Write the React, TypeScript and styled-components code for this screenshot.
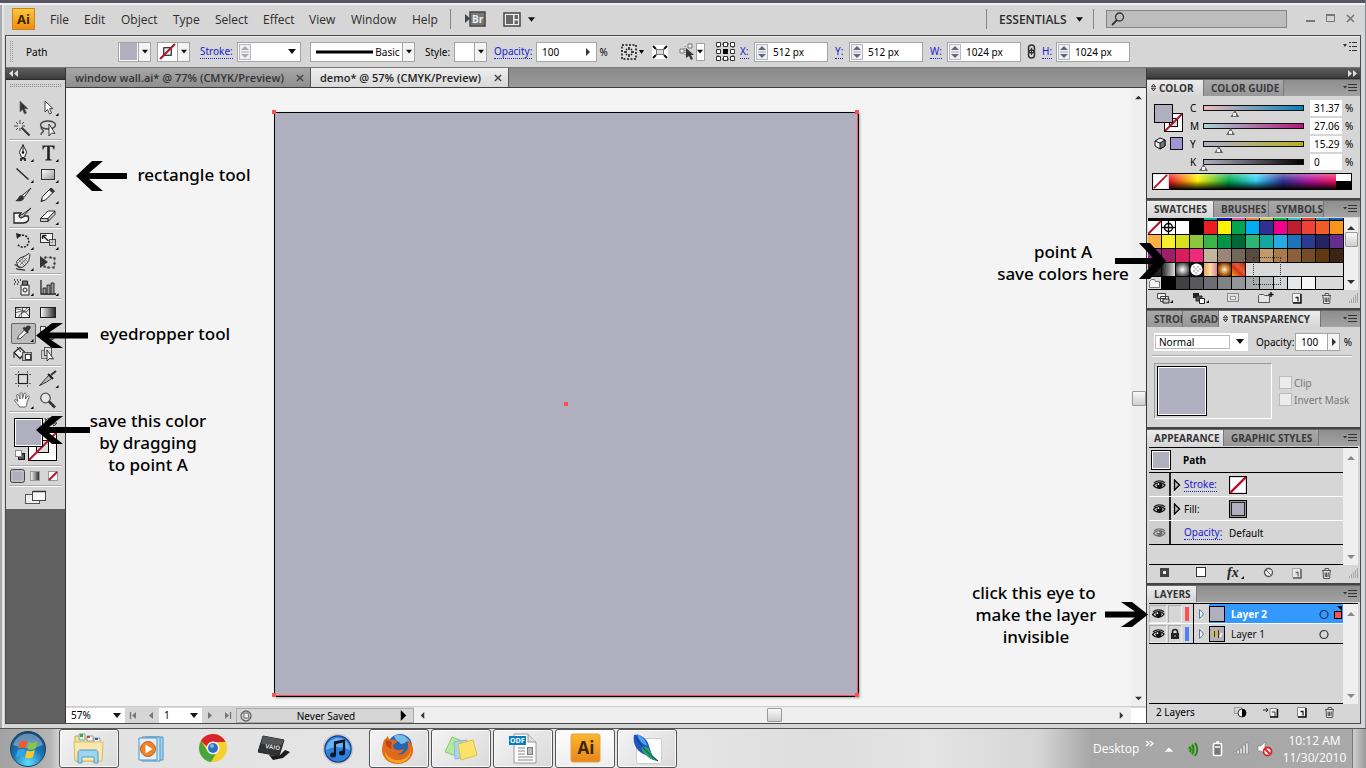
import React from 'react';
import styled, { createGlobalStyle, css } from 'styled-components';

const uiFont = '"Noto Sans", "Open Sans", sans-serif';
const chromeFont = '"Open Sans", "Noto Sans", sans-serif';
const noteFont = '"Noto Sans", "Open Sans", sans-serif';
const face = '#d6d6d6';
const fill = '#b0afc0';
const link = '#2020d0';

const GlobalStyle = createGlobalStyle`
  *, *::before, *::after { box-sizing: border-box; }
  body { margin: 0; background: #d6d6d6; font-family: ${uiFont}; font-size: 10px; color: #000; }
  button, input, select { font: inherit; color: inherit; margin: 0; padding: 0; border: 0; border-radius: 0; background: none; }
  svg { display: block; flex: none; }
`;

/* ---------- frame ---------- */
const Screen = styled.div`
  position: relative;
  display: flex;
  flex-direction: column;
  min-height: 100vh;
  overflow: hidden;
`;
const WindowFrame = styled.div`
  flex: 1;
  display: flex;
  flex-direction: column;
  padding: 0 4px 4px 5px;
  background: ${face};
  border-top: 3px solid #565662;
  border-right: 1px solid #8c8c94;
  box-shadow: inset 0 2px 0 #f0f0f2, inset 2px 0 0 #aaa, inset 4px 0 0 #e6e6e6;
`;
const Body = styled.div`
  flex: 1;
  display: flex;
  flex-direction: column;
  border: 1px solid #4a4a4a;
`;
const Workspace = styled.main`
  flex: 1;
  display: flex;
`;

/* ---------- menu bar ---------- */
const MenuBar = styled.header`
  display: flex;
  align-items: center;
  height: 32px;
  padding-left: 7px;
  font: 12px ${chromeFont};
  color: #2c2c2c;
`;
const AppLogo = styled.span`
  display: grid;
  place-items: center;
  width: 23px;
  height: 22px;
  margin-right: 9px;
  background: linear-gradient(#fbc73a, #ef8d12);
  border: 1px solid #c98320;
  color: #3b2600;
  font: bold 13px/20px ${chromeFont};
`;
const MenuItem = styled.button<{ $w: number }>`
  width: ${p => p.$w}px;
  padding-left: 6px;
  text-align: left;
  white-space: nowrap;
`;
const Divider = styled.i`
  width: 1px;
  height: 20px;
  background: #858585;
`;
const BarButton = styled.button<{ $ml: number }>`
  display: flex;
  align-items: center;
  gap: 7px;
  margin-left: ${p => p.$ml}px;
`;
const Essentials = styled.button`
  display: flex;
  align-items: center;
  justify-content: space-between;
  width: 106px;
  padding: 0 10px 0 12px;
  font: 600 12px ${chromeFont};
`;
const Spacer = styled.span` flex: 1; `;
const Search = styled.label`
  display: flex;
  align-items: center;
  width: 181px;
  height: 18px;
  margin: 0 17px 0 12px;
  padding-left: 4px;
  background: #bdbdbd;
  border: 1px solid #858585;
  input { width: 150px; outline: 0; }
`;
const WindowButtons = styled.div`
  display: flex;
  gap: 8px;
  margin: 0 5px 3px 0;
`;

/* ---------- control bar ---------- */
const ControlBar = styled.div`
  display: flex;
  align-items: center;
  height: 32px;
  padding-left: 4px;
  border-bottom: 1px solid #777;
  box-shadow: inset 0 1px 0 #eee;
`;
const Cell = styled.div<{ $w: number; $align?: string }>`
  display: flex;
  align-items: center;
  justify-content: ${p => p.$align || 'flex-start'};
  width: ${p => p.$w}px;
  flex: none;
  white-space: nowrap;
`;
const DotLink = styled.a`
  color: ${link};
  text-decoration: none;
  border-bottom: 1px dotted ${link};
  line-height: 13px;
`;
const Field = styled.div<{ $w: number; $h?: number }>`
  display: flex;
  align-items: center;
  width: ${p => p.$w}px;
  height: ${p => p.$h || 20}px;
  flex: none;
  background: #fff;
  border: 1px solid #a4a4a4;
  input { flex: 1; width: 10px; height: 100%; padding-left: 5px; outline: 0; }
`;
const Drop = styled.button`
  display: grid;
  place-items: center;
  align-self: stretch;
  width: 12px;
  flex: none;
  border-left: 1px solid #a4a4a4;
  background: #f4f4f4;
`;
const SpinBox = styled.span`
  display: grid;
  place-items: center;
  width: 12px;
  height: 16px;
  margin-left: 1px;
  border: 1px solid #b4b8c4;
  background: #f0f0f4;
`;
const Select = styled.div<{ $w: number; $h: number; $inset?: boolean }>`
  position: relative;
  display: flex;
  align-items: center;
  width: ${p => p.$w}px;
  height: ${p => p.$h}px;
  flex: none;
  background: #fff;
  select { appearance: none; width: 100%; height: 100%; padding-left: 5px; outline: 0; }
  svg { position: absolute; right: 4px; pointer-events: none; }
  ${p => p.$inset && css`&::before { content: ''; position: absolute; inset: 2px 18px 2px 1px; border: 1px solid #bbb; }`}
`;

/* ---------- tool box ---------- */
const ToolBox = styled.aside`
  display: flex;
  flex-direction: column;
  width: 60px;
  flex: none;
  background: #606060;
  border-right: 1px solid #333;
`;
const DarkHeader = styled.div<{ $right?: boolean }>`
  display: flex;
  align-items: center;
  justify-content: ${p => (p.$right ? 'flex-end' : 'flex-start')};
  height: ${p => (p.$right ? 11 : 12)}px;
  padding: 0 3px;
  background: linear-gradient(#5e5e5e, #3c3c3c);
  border-bottom: 1px solid #2c2c2c;
`;
const ToolFace = styled.div`
  padding: 4px 3px 0;
  height: 429px;
  background: ${face};
`;
const Grip = styled.div`
  height: 3px;
  margin: 0 1px 10px;
  overflow: hidden;
`;
const ToolGroup = styled.div`
  display: grid;
  grid-template-columns: 25px 25px;
  padding: 0 2px 1px;
  margin-bottom: 2px;
  border-bottom: 1px solid #fff;
  box-shadow: inset 0 -1px 0 #aaa;
`;
const ToolButton = styled.button<{ $on?: boolean }>`
  width: 25px;
  height: 21px;
  ${p => p.$on && css`
    border-radius: 2px;
    background: #bdbdbd;
    box-shadow: inset 0 0 0 1px #666;
  `}
`;
const ColorWell = styled.button`
  height: 51px;
  width: 54px;
`;
const WellGroup = styled.div<{ $h: number }>`
  display: flex;
  align-items: center;
  height: ${p => p.$h}px;
  border-bottom: 1px solid #fff;
  box-shadow: inset 0 -1px 0 #aaa;
`;

/* ---------- document ---------- */
const Document = styled.section`
  flex: 1;
  min-width: 0;
  display: flex;
  flex-direction: column;
  background: #f4f4f4;
`;
const DocTabs = styled.div`
  display: flex;
  height: 20px;
  background: linear-gradient(#8a8a8a, #9a9a9a);
  border-bottom: 1px solid #3c3c3c;
`;
const DocTab = styled.button<{ $on?: boolean; $w: number }>`
  display: flex;
  align-items: center;
  justify-content: space-between;
  width: ${p => p.$w}px;
  padding: 0 6px 0 9px;
  border-right: 1px solid #555;
  background: ${p => (p.$on ? 'linear-gradient(#eee, #d9d9d9)' : 'linear-gradient(#a6a6a6, #8f8f8f)')};
  color: ${p => (p.$on ? '#222' : '#333')};
  font: 600 11px ${chromeFont};
  white-space: nowrap;
`;
const CanvasRow = styled.div`
  flex: 1;
  display: flex;
`;
const Canvas = styled.div`
  flex: 1;
  padding: 24px 0 8px 208px;
`;
const Artboard = styled.div`
  position: relative;
  width: 585px;
  height: 585px;
  background: ${fill};
  border: 1px solid #000;
  box-shadow: inset -1px -1px 0 #ff4f4f, 1px 1px 2px #aaa;
`;
const Anchor = styled.i<{ $x: string; $y: string }>`
  position: absolute;
  left: ${p => p.$x};
  top: ${p => p.$y};
  width: 4px;
  height: 4px;
  margin: -3px 0 0 -3px;
  background: #ff4f4f;
`;
const VScroll = styled.div<{ $w?: number }>`
  display: flex;
  flex-direction: column;
  align-items: center;
  justify-content: space-between;
  width: ${p => p.$w || 15}px;
  padding: 6px 0 4px;
  background: #efefef;
`;
const Thumb = styled.button<{ $w: number; $h: number }>`
  width: ${p => p.$w}px;
  height: ${p => p.$h}px;
  flex: none;
  background: linear-gradient(#f8f8f8, #cfcfcf);
  border: 1px solid #999;
  border-radius: 1px;
`;
const StatusBar = styled.footer`
  display: flex;
  align-items: center;
  height: 17px;
  background: ${face};
  border-top: 1px solid #ccc;
`;
const PageNav = styled.div`
  display: flex;
  justify-content: space-around;
  width: 34px;
  button { height: 12px; }
`;
const SaveState = styled.div`
  display: grid;
  grid-template-columns: 14px 1fr 12px;
  align-items: center;
  width: 178px;
  height: 15px;
  padding: 0 3px;
  border: 1px solid #aaa;
  text-align: center;
`;
const HScroll = styled.div`
  flex: 1;
  display: flex;
  align-items: center;
  height: 16px;
  padding: 0 6px 0 5px;
  background: #efefef;
`;
const HTrack = styled.div`
  flex: 1;
  display: flex;
  justify-content: center;
  padding-left: 5px;
`;
const Corner = styled.i`
  width: 15px;
  height: 15px;
  background: #fff;
`;

/* ---------- panels ---------- */
const Dock = styled.aside`
  display: flex;
  flex-direction: column;
  width: 214px;
  flex: none;
  border-left: 1px solid #3a3a3a;
  background: ${face};
`;
const Panel = styled.section<{ $h?: number }>`
  display: flex;
  flex-direction: column;
  ${p => (p.$h ? css`height: ${p.$h}px; border-bottom: 2px solid #444;` : css`flex: 1;`)}
`;
const TabStrip = styled.div`
  display: flex;
  align-items: stretch;
  height: 17px;
  flex: none;
  border-top: 1px solid #666;
  background: linear-gradient(#8e8e8e, #a2a2a2);
`;
const PanelTab = styled.button<{ $w: number; $on?: boolean; $tight?: boolean }>`
  display: flex;
  align-items: center;
  gap: 3px;
  width: ${p => p.$w}px;
  padding: 0 0 1px ${p => (p.$tight ? 4 : 7)}px;
  overflow: hidden;
  white-space: nowrap;
  border-right: 1px solid #777;
  background: ${p => (p.$on ? 'linear-gradient(#ececec, #d6d6d6)' : 'linear-gradient(#a8a8a8, #979797)')};
  color: ${p => (p.$on ? '#333' : '#3a3a3a')};
  font: 700 10px ${chromeFont};
`;
const FlyoutButton = styled.button`
  margin-left: auto;
  padding: 0 3px 1px 0;
`;
const ColorBody = styled.div`
  display: grid;
  grid-template-columns: 38px 1fr;
  padding: 3px 3px 0 5px;
`;
const SliderRow = styled.div`
  display: grid;
  grid-template-columns: 9px 111px 35px 12px;
  align-items: center;
  height: 18px;
  > input { width: 32px; height: 16px; padding-left: 4px; background: #fff; outline: 0; }
`;
const Slider = styled.input<{ $from: string; $to: string }>`
  && { appearance: none; width: 109px; height: 18px; margin: 0; padding: 0; background: none; }
  &::-webkit-slider-runnable-track {
    height: 6px;
    background:
      linear-gradient(90deg, ${p => p.$from}, ${p => p.$to}) 5px 1px / 99px 4px no-repeat,
      linear-gradient(#111, #111) 4px 0 / 101px 6px no-repeat;
  }
  &::-webkit-slider-thumb {
    appearance: none;
    width: 9px;
    height: 7px;
    margin-top: 5px;
    clip-path: polygon(50% 0, 100% 100%, 0 100%);
    background:
      linear-gradient(#f4f4f4, #f4f4f4) 3px 3px / 3px 3px no-repeat,
      #6a6a6a;
  }
`;
const Spectrum = styled.div`
  grid-column: 1 / 3;
  display: grid;
  grid-template-columns: 16px 1fr 15px;
  width: 200px;
  height: 17px;
  margin-top: 2px;
  border: 1px solid #000;
`;
const Rainbow = styled.i`
  background:
    linear-gradient(rgba(255,255,255,.35), transparent 45%, rgba(0,0,0,.9)),
    linear-gradient(90deg, #e8112d, #fff200 17%, #00a651 36%, #35d0f5 52%, #2e3192 68%, #b0139a 84%, #ed145b);
`;
const Duo = styled.i` background: linear-gradient(#fff 50%, #000 50%); `;

const ListRow = styled.div<{ $h: number }>`
  display: flex;
  height: ${p => p.$h}px;
  padding: 1px 2px 0 1px;
`;
const SwatchGrid = styled.div`
  width: 196px;
  display: grid;
  grid-template-columns: repeat(14, 13px);
  grid-template-rows: 2px repeat(5, 13px);
  gap: 1px;
  background: #000;
  border-bottom: 1px solid #000;
  height: 72px;
  position: relative;
  overflow: hidden;
`;
const Swatch = styled.button<{ $bg: string }>`
  min-width: 0;
  background: ${p => p.$bg};
  display: grid;
  place-items: center;
`;
const EmptyCells = styled.i<{ $from: number }>`
  grid-column: ${p => p.$from} / 15;
  background: #dadada;
`;
const Marquee = styled.i`
  position: absolute;
  left: 105px;
  top: 39px;
  width: 28px;
  height: 28px;
  border: 1px dotted #333;
`;
const IconBar = styled.div<{ $h: number }>`
  display: flex;
  align-items: center;
  justify-content: space-between;
  height: ${p => p.$h}px;
  margin-top: auto;
  padding: 0 1px 3px 9px;
`;
const TransparencyTop = styled.div`
  display: flex;
  align-items: center;
  height: 30px;
  margin: 0 8px 6px 5px;
  padding-left: 2px;
  border-bottom: 1px solid #fff;
  box-shadow: 0 -1px 0 #aaa inset;
  > label { width: 42px; margin-left: 8px; }
`;
const TransparencyBottom = styled.div`
  display: flex;
  padding-left: 7px;
`;
const PreviewBox = styled.div`
  width: 118px;
  height: 56px;
  margin-right: 7px;
  padding: 2px;
  border: 1px solid;
  border-color: #999 #fff #fff #999;
`;
const BigThumb = styled.i`
  display: block;
  width: 50px;
  height: 50px;
  background: ${fill};
  border: 1px solid #000;
  box-shadow: inset 0 0 0 1px #fff;
`;
const Check = styled.label`
  display: flex;
  align-items: center;
  gap: 2px;
  height: 17px;
  color: #777;
  white-space: nowrap;
  input { appearance: none; width: 13px; height: 13px; background: #ececec; border: 1px solid #bbb; }
`;
const Checks = styled.div` padding-top: 11px; `;

const ListArea = styled.div`
  display: flex;
  flex: 1;
  margin: 1px 2px 0;
  border-top: 1px solid #000;
`;
const ListColumn = styled.div`
  flex: 1;
  display: flex;
  flex-direction: column;
  border-bottom: 1px solid #000;
`;
const AttrHead = styled.div`
  display: flex;
  align-items: center;
  gap: 12px;
  height: 25px;
  padding-left: 2px;
  border-bottom: 1px solid #000;
  font-weight: bold;
`;
const AttrRow = styled.div<{ $last?: boolean }>`
  display: grid;
  grid-template-columns: 22px 13px 45px 1fr;
  align-items: center;
  height: 24px;
  border-bottom: 1px solid ${p => (p.$last ? '#000' : '#fff')};
  > a, > span { justify-self: start; white-space: nowrap; }
`;
const EyeCell = styled.button`
  display: grid;
  place-items: center;
  align-self: stretch;
  background: #cfcfcf;
  border-right: 2px solid #222;
`;
const ColorChip = styled.i<{ $s: number }>`
  display: block;
  width: ${p => p.$s}px;
  height: ${p => p.$s}px;
  background: ${fill};
  border: 1px solid #000;
  box-shadow: inset 0 0 0 1px #fff;
`;
const InkChip = styled(ColorChip)`
  box-shadow: inset 0 0 0 1px #999, inset 0 0 0 2px #222;
`;
const LayerRow = styled.div<{ $on?: boolean }>`
  display: grid;
  grid-template-columns: 19px 15px 11px 15px 22px 1fr 31px;
  align-items: center;
  height: 20px;
  border-bottom: 1px solid ${p => (p.$on ? '#fff' : '#000')};
  background: ${p => (p.$on ? `linear-gradient(90deg, ${face} 60px, #3399ff 60px)` : face)};
  color: ${p => (p.$on ? '#fff' : '#111')};
  font-weight: ${p => (p.$on ? 'bold' : 'normal')};
  white-space: nowrap;
`;
const LayerEye = styled.button`
  display: grid;
  place-items: center;
  width: 18px;
  height: 18px;
  border: 1px solid;
  border-color: #aaa #eee #eee #aaa;
`;
const LayerLock = styled(LayerEye)` width: 14px; `;
const LayerBar = styled.i<{ $c: string }>`
  width: 11px;
  height: 20px;
  border-right: 1px solid #000;
  background: linear-gradient(${p => p.$c}, ${p => p.$c}) 2px 3px / 4px 14px no-repeat;
`;
const LayerThumb = styled.i`
  width: 16px;
  height: 16px;
  border: 1px solid #000;
  background: ${fill};
`;

/* ---------- notes ---------- */
const Note = styled.p<{ $side: 'left' | 'right'; $x: number; $y: number; $w: number }>`
  position: absolute;
  ${p => p.$side}: ${p => p.$x}px;
  top: ${p => p.$y}px;
  width: ${p => p.$w}px;
  margin: 0;
  text-align: center;
  white-space: pre;
  font: 500 17px/22px ${noteFont};
  color: #000;
  pointer-events: none;
`;
const ArrowPin = styled.div<{ $side: 'left' | 'right'; $x: number; $y: number }>`
  position: absolute;
  ${p => p.$side}: ${p => p.$x}px;
  top: ${p => p.$y}px;
  pointer-events: none;
`;

/* ---------- task bar ---------- */
const TaskBar = styled.footer`
  display: flex;
  align-items: stretch;
  height: 40px;
  border-top: 1px solid #555;
  background: linear-gradient(90deg, #a2a2a2 0, #b4b4b4 50px, #e2e2e2 64px, #e6e6e6 48%, #dedede 60%, #e4e4e4 68%, #d6d6d6 76%, #a6a6a6 80%, #a9a9a9 100%);
`;
const StartButton = styled.button`
  width: 56px;
  display: grid;
  place-items: center;
  margin-right: 3px;
`;
const TaskButton = styled.button<{ $open?: boolean; $on?: boolean }>`
  display: grid;
  place-items: center;
  width: 60px;
  margin-right: 2px;
  border-radius: 3px;
  ${p => p.$open && css`
    border: 1px solid #555;
    background: ${p.$on ? 'linear-gradient(#fdfdfd, #eee)' : 'linear-gradient(135deg, #f4f4f4, #dadada)'};
    box-shadow: inset 0 0 0 1px #fafafa;
  `}
`;
const Tray = styled.div`
  display: flex;
  align-items: center;
  margin-left: auto;
  color: #fff;
  font: 12px ${chromeFont};
`;
const DesktopLabel = styled.button`
  display: flex;
  align-items: flex-start;
  gap: 6px;
  width: 64px;
`;
const TrayIcon = styled.button`
  display: grid;
  place-items: center;
  width: 24px;
  height: 24px;
`;
const Clock = styled.time`
  width: 75px;
  text-align: center;
  line-height: 17px;
`;
const ShowDesktop = styled.button`
  width: 14px;
  height: 39px;
  border-left: 1px solid #777;
  background: linear-gradient(90deg, #cfcfcf, #9a9a9a);
`;

/* ---------- shared drawings ---------- */
const Caret = ({ w = 7 }: { w?: number }) => (
  <svg width={w} height="5" viewBox="0 0 8 5" aria-hidden><path d="M0 0h8L4 5z" fill="#111" /></svg>
);
type Dir = 'up' | 'down' | 'left' | 'right';
const tri: Record<Dir, string> = {
  up: 'M0 6L4 2l4 4z', down: 'M0 2h8L4 6z', left: 'M6 0v8L2 4z', right: 'M2 0v8l4-4z',
};
const Tri = ({ d, s = 8, c = '#333' }: { d: Dir; s?: number; c?: string }) => (
  <svg width={s} height={s} viewBox="0 0 8 8" aria-hidden><path d={tri[d]} fill={c} /></svg>
);
const Spin = ({ c = '#667' }: { c?: string }) => (
  <SpinBox><svg width="8" height="14" viewBox="0 0 8 14"><path d="M0 5l4-4 4 4zM0 9h8l-4 4z" fill={c} /><path d="M-2 7h12" stroke="#aab" /></svg></SpinBox>
);
const Flyout = () => (
  <svg width="14" height="10" viewBox="0 0 14 10"><path d="M0 3h4L2 5.500z" fill="#333" /><path d="M5 1.500h9M5 4.500h9M5 7.500h9" stroke="#333" /></svg>
);
const Updown = () => (
  <svg width="5" height="9" viewBox="0 0 6 9"><path d="M.5 3.500L3 .5l2.500 3zM.5 5.500L3 8.500l2.500-3z" fill="#eee" stroke="#222" /></svg>
);
const NoneMark = ({ s, hole = true, border = true }: { s: number; hole?: boolean; border?: boolean }) => (
  <svg width={s} height={s} viewBox="0 0 16 16">
    <rect x=".5" y=".5" width="15" height="15" fill="#fff" stroke={border ? '#000' : 'none'} />
    {hole && <rect x="4.500" y="4.500" width="7" height="7" fill="#fff" stroke="#000" />}
    <path d="M1 15L15 1" stroke="#b5122c" strokeWidth="2" />
  </svg>
);
const Eye = ({ dim }: { dim?: boolean }) => (
  <svg width="13" height="10" viewBox="0 0 13 10" opacity={dim ? 0.5 : 1}>
    <path d="M.5 5.500C3 2 9 1.500 12 5 9.500 9 3.500 9.500 .5 5.500z" fill="#ddd" stroke="#111" strokeWidth="1.300" />
    <circle cx="6.500" cy="5.200" r="3" fill="#111" /><circle cx="5.400" cy="4.200" r=".9" fill="#fff" />
    <path d="M1 3C4 .2 9 .3 12 2.800" fill="none" stroke="#222" strokeWidth="1.300" />
  </svg>
);
const GripCorner = () => (
  <svg width="10" height="10" viewBox="0 0 10 10"><path d="M8 1h1M8 3h1M6 3h1M8 5h1M6 5h1M4 5h1M8 7h1M6 7h1M4 7h1M2 7h1M8 9h1M6 9h1M4 9h1M2 9h1M0 9h1" stroke="#777" /></svg>
);
const NewPage = ({ dim }: { dim?: boolean }) => (
  <svg width="12" height="12" viewBox="0 0 12 12" opacity={dim ? 0.6 : 1}>
    <path d="M1.500 1.500h8v9h-8z" fill="#f4f4f4" stroke="#888" /><path d="M10 2v9H2" fill="none" stroke="#111" strokeWidth="1.500" /><path d="M4.500 5.500h2.500v4" fill="none" stroke="#222" strokeWidth="1.300" />
  </svg>
);
const Trash = () => (
  <svg width="11" height="12" viewBox="0 0 11 12"><path d="M1 3.500h9M4 3V1.500h3.500L8 3M2 4l.6 7.500h6L9.200 4" fill="#e4e4e4" stroke="#555" /><path d="M4 5.500l.3 4.500M5.600 5.500V10M7.300 5.500L7 10" stroke="#444" /></svg>
);
const Twisty = () => (
  <svg width="12" height="12" viewBox="0 0 12 12"><path d="M3.500 1v10l5-5z" fill="#bbb" stroke="#000" strokeWidth="1.300" /></svg>
);

/* ---------- tool icons, drawn on a 25 x 21 grid ---------- */
const more = <path d="M22.500 16v3h-3z" />;
const arrowPath = 'M9 4v11l2.500-2.500 2 4.500 2-1-2-4.300h3.500z';
const toolGroups: { name: string; art: React.ReactNode; on?: boolean }[][] = [
  [
    { name: 'Selection', art: <path d={arrowPath} fill="#333" stroke="#666" strokeWidth=".7" /> },
    { name: 'Direct Selection', art: <><path d={arrowPath} fill="#fff" stroke="#333" strokeWidth=".9" />{more}</> },
    { name: 'Magic Wand', art: <><path d="M10.500 9.500l8 8" stroke="#333" strokeWidth="2" /><path d="M9 2v4M9 10v3M3 8h4M11 8h3M5 4l2 2M13 4l-2 2M5 12l2-2" stroke="#444" /></> },
    { name: 'Lasso', art: <><ellipse cx="12" cy="7" rx="7.500" ry="4" fill="none" stroke="#444" strokeWidth="1.400" /><path d="M6 9c-3 2 3 3 1 5s-2 0-2 3" fill="none" stroke="#444" strokeWidth="1.300" /><path d="M13 6v12l2.500-3 3.500.5z" fill="#fff" stroke="#222" strokeWidth=".9" /></> },
  ],
  [
    { name: 'Pen', art: <><path d="M12 1.500c.8 3 3.500 6 3.500 8l-2 5h-3l-2-5c0-2 2.700-5 3.500-8z" fill="#f4f4f4" stroke="#222" /><path d="M12 3v6" stroke="#222" /><circle cx="12" cy="9.500" r="1.200" /><path d="M9 15h2v3H9zM13 15h2v3h-2zM11 15h2v1.500h-2z" fill="#333" />{more}</> },
    { name: 'Type', art: <><path d="M6.500 2.500h12V6.500h-.9C17.200 4.300 16.600 3.800 13.800 3.800V15c0 1.200.5 1.600 2 1.600v.9H9.200v-.9c1.500 0 2-.4 2-1.600V3.800C8.400 3.800 7.800 4.300 7.400 6.500H6.500z" fill="#222" />{more}</> },
    { name: 'Line Segment', art: <><path d="M5.500 4.500l12 11" stroke="#222" strokeWidth="1.400" />{more}</> },
    { name: 'Rectangle', art: <><rect x="5.500" y="5.500" width="13" height="10" fill="url(#metal)" stroke="#333" />{more}</> },
    { name: 'Paintbrush', art: <><path d="M20 3L11 10.500l2 2z" fill="#e4e4e4" stroke="#222" strokeWidth=".9" /><path d="M11 10.500c-3-1-3 3-6.500 5.500 4 1 8.500 0 8.500-3.500z" fill="#333" /></> },
    { name: 'Pencil', art: <><path d="M5 16.500l1.500-5 8.500-8.500 3.500 3L9.500 15z" fill="#f4f4f4" stroke="#222" /><path d="M13 5l3.500 3.200L18.500 6 15 3zM5 16.500l.8-2.500 1.700 1.500z" fill="#333" />{more}</> },
    { name: 'Blob Brush', art: <><path d="M3 7h7l-2 3 2 2 4-2h3c2 4-1 7-5 7H3z" fill="#f4f4f4" stroke="#222" strokeWidth="1.300" /><path d="M20 2l-8 6c-2 0-3 2-4 3 3 1 5 0 5.500-2z" fill="#bbb" stroke="#222" strokeWidth=".9" /></> },
    { name: 'Eraser', art: <><path d="M4.500 12.500L12 5h7l-7 7.500z" fill="#fafafa" stroke="#333" /><path d="M4.500 12.500V15.500H12v-3zM12 15.500l7-7V5l-7 7.500z" fill="#ccc" stroke="#333" />{more}</> },
  ],
  [
    { name: 'Rotate', art: <><path d="M8 5.500a6 6 0 1 1-1.500 7.500" fill="none" stroke="#222" strokeWidth="1.500" strokeDasharray="2 1.200" /><path d="M5 2l5.500 1.500L6 8z" fill="#222" />{more}</> },
    { name: 'Scale', art: <><rect x="4.500" y="2.500" width="12" height="9" fill="#f4f4f4" stroke="#333" /><rect x="13.500" y="8.500" width="6" height="6" fill="#ccc" fillOpacity=".7" stroke="#444" /><path d="M6.500 4.500l6 5.500M6.500 4.500h4M6.500 4.500v3.500" stroke="#222" strokeWidth="1.400" fill="none" />{more}</> },
    { name: 'Warp', art: <><path d="M9 6l5-2 4-2.500 1 1c-.5 3-1 4-1 6l-3 4-4 3-4-1-1.500-5z" fill="#ddd" stroke="#333" /><path d="M8 8l5 5M10 6.500l5 5M12 5l4.500 4.500M7 11l6-6M9 13l7-7" stroke="#555" strokeWidth=".7" /><path d="M3.500 13c3-1 3 3 6 2.500M5 16.500c4 2 7 .5 9 2" stroke="#333" strokeWidth="1.200" fill="none" />{more}</> },
    { name: 'Free Transform', art: <><rect x="8.500" y="5.500" width="10" height="10" fill="none" stroke="#111" strokeWidth="2" strokeDasharray="2 3" /><rect x="8.500" y="5.500" width="10" height="10" fill="none" stroke="#666" strokeDasharray="1 1" /><path d="M4 4v12l8-6z" fill="#333" /></> },
  ],
  [
    { name: 'Symbol Sprayer', art: <><path d="M10 8h8v10h-8z" fill="#eee" stroke="#222" /><path d="M11.500 4h5v4h-5z" fill="#777" stroke="#222" /><circle cx="14" cy="13" r="2" fill="none" stroke="#222" /><path d="M3 3h1M6 3h1M9 3h1M4 5h1M7 5h1M3 7h1M6 7h1" stroke="#222" strokeWidth="1.500" />{more}</> },
    { name: 'Column Graph', art: <><path d="M5 3v14h15" stroke="#222" strokeWidth="1.300" fill="none" /><path d="M7 11h3v6H7zM11 8h3v9h-3zM15 6h3v11h-3z" fill="#999" stroke="#222" strokeWidth=".9" />{more}</> },
  ],
  [
    { name: 'Mesh', art: <><rect x="4.500" y="5.500" width="14" height="10" fill="#f0f0f0" stroke="#222" /><path d="M4 12c5-6 10 2 14-5M10 5c5 4-3 8 2 11M5 7c4 0 10 2 13 7M8 15c0-4 6-5 8-9" fill="none" stroke="#444" strokeWidth=".9" /></> },
    { name: 'Gradient', art: <rect x="4.500" y="5.500" width="15" height="10" fill="url(#fade)" stroke="#222" /> },
    { name: 'Eyedropper', on: true, art: <><path d="M6.500 16l1-3 6-6 2.500 2.500-6.500 6z" fill="#f4f4f4" stroke="#333" strokeWidth=".9" /><path d="M11.500 5.500l5 5 1.500-1.500-1-1c2-1 3.500-3.500 2-5s-4 0-4.800 1.700l-1-1z" fill="#333" />{more}</> },
    { name: 'Blend', art: <><rect x="4.500" y="3.500" width="5" height="5" fill="#eee" stroke="#444" /><rect x="8.500" y="7.500" width="5" height="5" fill="#bbb" stroke="#444" /><circle cx="15" cy="14" r="3" fill="#999" stroke="#333" /></> },
    { name: 'Live Paint Bucket', art: <><path d="M3 8.500l6-5 5 5-5 6z" fill="#f0f0f0" stroke="#222" strokeWidth="1.200" /><path d="M6 3l4 5M3 9v5" stroke="#222" /><rect x="11.500" y="8.500" width="9" height="8" fill="#bbb" stroke="#555" /><rect x="14.500" y="10.500" width="5" height="5" fill="#fff" stroke="#333" /></> },
    { name: 'Live Paint Selection', art: <><rect x="5.500" y="6.500" width="9" height="8" fill="#ccc" stroke="#777" /><rect x="8.500" y="3.500" width="7" height="8" fill="#ddd" stroke="#555" /><path d="M11 6v11l2.500-2.500 4 .5z" fill="#fff" stroke="#222" strokeWidth=".9" /></> },
  ],
  [
    { name: 'Artboard', art: <><rect x="7.500" y="5.500" width="9" height="9" fill="#ddd" stroke="#222" strokeWidth="1.200" /><path d="M7.500 2v2M16.500 2v2M7.500 16v2M16.500 16v2M4 5.500h2M4 14.500h2M18 5.500h2M18 14.500h2" stroke="#666" /></> },
    { name: 'Slice', art: <><path d="M3.500 16.500L13.500 5.500l3 3C13 12 8 14.500 3.500 16.500z" fill="#bbb" stroke="#222" strokeWidth=".9" /><path d="M12 5l5 5" stroke="#222" strokeWidth="2" /><path d="M15 6l5-4" stroke="#333" strokeWidth="2" />{more}</> },
    { name: 'Hand', art: <><path d="M8.500 17c-1-3-4-4-5-7 1-1 2 0 3.500 1.500L5.500 5c1-1 2-.5 2.300.5L9 9V3.500c.6-1 2-1 2.200 0L11.500 8.500l1.500-5c1-.8 2-.3 2 .8L14.300 9l2.500-3c1-.3 1.700.4 1.400 1.400L16 12c-.3 3-.8 4-1.500 5z" fill="#fff" stroke="#555" strokeWidth=".9" />{more}</> },
    { name: 'Zoom', art: <><circle cx="9.500" cy="8" r="4.800" fill="#e8e8e8" stroke="#555" strokeWidth="1.300" /><path d="M13 11.500l6 6" stroke="#333" strokeWidth="2.600" /></> },
  ],
];

const Tool = ({ name, art, on }: { name: string; art: React.ReactNode; on?: boolean }) => (
  <ToolButton $on={on} aria-label={name} aria-pressed={!!on}>
    <svg width="25" height="21" viewBox="0 0 25 21">
      <defs>
        <linearGradient id="metal" x2="1" y2="1"><stop stopColor="#fff" /><stop offset="1" stopColor="#999" /></linearGradient>
        <linearGradient id="fade"><stop stopColor="#fff" /><stop offset="1" stopColor="#222" /></linearGradient>
      </defs>
      {art}
    </svg>
  </ToolButton>
);

const Toolbox = () => (
  <ToolBox>
    <DarkHeader><svg width="9" height="7" viewBox="0 0 9 7"><path d="M4 0v7L0 3.500zM9 0v7L5 3.500z" fill="#ddd" /></svg></DarkHeader>
    <ToolFace>
      <Grip><svg width="52" height="3"><path d="M0 .5h52M0 2.500h52" stroke="#8a8a8a" strokeDasharray="1 1" /></svg></Grip>
      {toolGroups.map((g, i) => (
        <ToolGroup key={i}>{g.map(t => <Tool key={t.name} {...t} />)}</ToolGroup>
      ))}
      <WellGroup $h={52}>
        <ColorWell aria-label="Fill and stroke">
          <svg width="54" height="51" viewBox="0 3 54 51">
            <path d="M37 8c4-4 8-1 8 4M36 6l1 4 4-1M43 11h5l-3 3z" fill="none" stroke="#333" />
            <rect x="19.500" y="20.500" width="28" height="28" fill="#fff" stroke="#000" />
            <rect x="27.500" y="28.500" width="12" height="12" fill="#ddd" stroke="#000" />
            <path d="M20 48L47 21" stroke="#b5122c" strokeWidth="2" />
            <rect x="5.500" y="6.500" width="28" height="28" fill={fill} stroke="#000" />
            <rect x="6.500" y="7.500" width="26" height="26" fill="none" stroke="#fff" />
            <rect x="9.500" y="41.500" width="6" height="6" fill="#555" stroke="#111" />
            <rect x="6.500" y="38.500" width="6" height="6" fill="#fff" stroke="#888" />
          </svg>
        </ColorWell>
      </WellGroup>
      <WellGroup $h={20}>
        <svg width="54" height="18" viewBox="0 0 54 18">
          <rect x="1.500" y="1.500" width="14" height="13" rx="2" fill="#bbb" stroke="#444" />
          <rect x="4" y="4" width="9" height="8" fill={fill} />
          <rect x="21.500" y="3.500" width="9" height="9" fill="url(#fade)" stroke="#999" />
          <rect x="39.500" y="3.500" width="9" height="9" fill="#fff" stroke="#999" />
          <path d="M40 12l8-8" stroke="#b5122c" strokeWidth="2" />
        </svg>
      </WellGroup>
      <svg width="54" height="20" viewBox="0 0 54 20">
        <rect x="16.500" y="7.500" width="14" height="9" fill="#eee" stroke="#555" />
        <rect x="23.500" y="4.500" width="13" height="9" fill="#f8f8f8" stroke="#444" /><path d="M24 4.500h13" stroke="#333" strokeWidth="1.500" />
      </svg>
    </ToolFace>
  </ToolBox>
);

const NumField = ({ id, label, value, w }: { id: string; label: string; value: string; w: number }) => (
  <>
    <Cell $w={w}><DotLink as="label" htmlFor={id}>{label}</DotLink></Cell>
    <Field $w={74}><Spin /><input id={id} defaultValue={value} /></Field>
  </>
);

const Controls = () => (
  <ControlBar>
    <Cell $w={16}><svg width="4" height="22" viewBox="0 0 4 22"><path d="M.5 0v22M2.500 0v22" stroke="#999" strokeDasharray="1 1" /></svg></Cell>
    <Cell $w={92}>Path</Cell>
    <Cell $w={39}>
      <Field $w={33}>
        <Cell $w={19} $align="center"><svg width="17" height="17"><rect width="17" height="17" fill={fill} /></svg></Cell>
        <Drop aria-label="Fill color"><Caret w={6} /></Drop>
      </Field>
    </Cell>
    <Cell $w={43}>
      <Field $w={33}>
        <Cell $w={19} $align="center"><NoneMark s={17} border={false} /></Cell>
        <Drop aria-label="Stroke color"><Caret w={6} /></Drop>
      </Field>
    </Cell>
    <Cell $w={37}><DotLink href="#stroke">Stroke:</DotLink></Cell>
    <Cell $w={73}>
      <Field $w={64}><Spin c="#aaa" /><input aria-label="Stroke weight" /><Cell $w={12}><Caret w={8} /></Cell></Field>
    </Cell>
    <Cell $w={115}>
      <Field $w={105}>
        <svg width="62" height="16"><path d="M5 8h57" stroke="#000" strokeWidth="3" /></svg>
        <Cell $w={29} $align="center">Basic</Cell>
        <Drop aria-label="Brush"><Caret w={6} /></Drop>
      </Field>
    </Cell>
    <Cell $w={29}>Style:</Cell>
    <Cell $w={40}>
      <Field $w={33}><Cell $w={19} /><Drop aria-label="Style"><Caret w={6} /></Drop></Field>
    </Cell>
    <Cell $w={42}><DotLink as="label" htmlFor="opacity">Opacity:</DotLink></Cell>
    <Field $w={61}><input id="opacity" defaultValue="100" /><Cell $w={12}><Tri d="right" s={8} /></Cell></Field>
    <Cell $w={24}>&nbsp;%</Cell>
    <Cell $w={31}>
      <svg width="24" height="16" viewBox="0 0 24 16"><rect x="1" y="1" width="14" height="14" fill="#ddd" stroke="#111" strokeWidth="1.500" strokeDasharray="2 1.500" /><path d="M8 3v3M8 10v3M3 8h3M10 8h3M5 5l1 1M11 5l-1 1M5 11l1-1M11 11l-1-1" stroke="#111" strokeWidth="1.500" /><path d="M18 6h5l-2.500 4z" /></svg>
    </Cell>
    <Cell $w={27}>
      <svg width="16" height="14" viewBox="0 0 16 14"><rect width="16" height="14" fill="#fff" /><rect x="4.500" y="4.500" width="7" height="5" fill="#ddd" stroke="#777" /><path d="M1 1l3 3M15 1l-3 3M1 13l3-3M15 13l-3-3" stroke="#111" strokeWidth="2" /></svg>
    </Cell>
    <Cell $w={37}>
      <svg width="17" height="18" viewBox="0 0 17 18"><path d="M1 6h4v4H1zM9 1h4v4H9z" fill="#eee" stroke="#777" /><path d="M6 3v9" stroke="#777" strokeDasharray="1 1" /><path d="M7 5v10l3-2 2 4 2-1-2-4h3z" fill="#333" /></svg>
      <Field as="button" $w={9} $h={18} aria-label="Selection options"><Caret w={6} /></Field>
    </Cell>
    <Cell $w={24}>
      <svg width="19" height="19" viewBox="0 0 19 19"><path d="M2 2h15v15H2z" fill="none" stroke="#333" strokeDasharray="1 1" /><g fill="#fff" stroke="#333"><path d="M.5.5h4v4h-4zM7.500.5h4v4h-4zM14.500.5h4v4h-4zM.5 7.500h4v4h-4zM14.500 7.500h4v4h-4zM.5 14.500h4v4h-4zM7.500 14.500h4v4h-4zM14.500 14.500h4v4h-4z" /></g><path d="M7 7h5v5H7z" /></svg>
    </Cell>
    <NumField id="x" label="X:" value="512 px" w={14} />
    <Cell $w={7} />
    <NumField id="y" label="Y:" value="512 px" w={14} />
    <Cell $w={7} />
    <NumField id="w" label="W:" value="1024 px" w={17} />
    <Cell $w={21} $align="center">
      <svg width="9" height="15" viewBox="0 0 9 15"><rect x="1.500" y="1" width="6" height="8" rx="3" fill="#ccc" stroke="#333" strokeWidth="1.500" /><rect x="1.500" y="6" width="6" height="8" rx="3" fill="none" stroke="#333" strokeWidth="1.500" /><path d="M4.500 4v7" stroke="#333" /></svg>
    </Cell>
    <NumField id="h" label="H:" value="1024 px" w={14} />
    <FlyoutButton aria-label="Control bar menu"><svg width="14" height="24" viewBox="0 0 14 24"><path d="M0 5h4L2 8z" fill="#333" /><path d="M6 3.500h2M9 3.500h5M6 7.500h2M9 7.500h5M6 11.500h2M9 11.500h5" stroke="#333" /></svg></FlyoutButton>
  </ControlBar>
);

const menu: [string, number][] = [['File', 34], ['Edit', 37], ['Object', 52], ['Type', 42], ['Select', 48], ['Effect', 46], ['View', 42], ['Window', 61], ['Help', 44]];

const Menus = () => (
  <MenuBar>
    <AppLogo>Ai</AppLogo>
    {menu.map(([m, w]) => <MenuItem key={m} $w={w}>{m}</MenuItem>)}
    <Divider />
    <BarButton $ml={14} aria-label="Bridge">
      <svg width="21" height="16" viewBox="0 0 21 16"><rect x="5" y="1" width="15" height="14" fill="#777" stroke="#444" strokeWidth="1.500" /><path d="M0 3v9l5-4.500z" fill="#444" /><text x="7" y="12" fontSize="10" fontWeight="bold" fill="#eee" fontFamily="Open Sans">Br</text></svg>
    </BarButton>
    <BarButton $ml={17} aria-label="Arrange documents">
      <svg width="18" height="15" viewBox="0 0 18 15"><rect x="1" y="1" width="16" height="13" fill="#eee" stroke="#444" strokeWidth="1.500" /><path d="M3 3h7v9H3zM11.500 3H15v4h-3.500zM11.500 8.500H15V12h-3.500z" fill="#666" /></svg>
      <Caret w={7} />
    </BarButton>
    <Spacer />
    <Divider />
    <Essentials>ESSENTIALS<Caret w={7} /></Essentials>
    <Divider />
    <Search>
      <svg width="14" height="14" viewBox="0 0 14 14"><circle cx="8.500" cy="5" r="4" fill="none" stroke="#333" strokeWidth="1.300" /><path d="M6 8l-5 5" stroke="#333" strokeWidth="1.800" /></svg>
      <input aria-label="Search" />
    </Search>
    <WindowButtons>
      <button aria-label="Minimize"><svg width="12" height="12"><path d="M2 9h9" stroke="#777" strokeWidth="2" /></svg></button>
      <button aria-label="Maximize"><svg width="12" height="12"><path d="M2.500 3.500h8v6h-8z" fill="none" stroke="#777" /><path d="M2 3h9" stroke="#777" strokeWidth="2" /></svg></button>
      <button aria-label="Close"><svg width="12" height="12"><path d="M3 3l7 7M10 3l-7 7" stroke="#777" strokeWidth="1.600" /></svg></button>
    </WindowButtons>
  </MenuBar>
);

const CloseX = () => <svg width="8" height="8" viewBox="0 0 9 9"><path d="M1 1l7 7M8 1L1 8" stroke="#444" strokeWidth="1.600" /></svg>;
const NavTri = ({ d, bar, label }: { d: 'left' | 'right'; bar?: boolean; label: string }) => (
  <button aria-label={label}>
    <svg width="9" height="9" viewBox="0 0 9 9"><path d={d === 'left' ? 'M7 1v7L3 4.500z' : 'M2 1v7l4-3.500z'} fill="#777" />{bar && <path d={d === 'left' ? 'M1.500 1v7' : 'M7.500 1v7'} stroke="#777" strokeWidth="1.400" />}</svg>
  </button>
);

const Doc = () => (
  <Document>
    <DocTabs>
      <DocTab $w={245}>window wall.ai* @ 77% (CMYK/Preview)<CloseX /></DocTab>
      <DocTab $w={198} $on>demo* @ 57% (CMYK/Preview)<CloseX /></DocTab>
    </DocTabs>
    <CanvasRow>
      <Canvas>
        <Artboard>
          <Anchor $x="0" $y="0" /><Anchor $x="100%" $y="0" /><Anchor $x="0" $y="100%" /><Anchor $x="100%" $y="100%" /><Anchor $x="50%" $y="50%" />
        </Artboard>
      </Canvas>
      <VScroll><Tri d="up" s={7} /><Thumb $w={14} $h={15} aria-label="Scroll vertically" /><Tri d="down" s={7} /></VScroll>
    </CanvasRow>
    <StatusBar>
      <Select $w={59} $h={15}><select aria-label="Zoom"><option>57%</option></select><Caret w={8} /></Select>
      <PageNav><NavTri d="left" bar label="First" /><NavTri d="left" label="Previous" /></PageNav>
      <Select $w={43} $h={15}><select aria-label="Artboard"><option>1</option></select><Caret w={8} /></Select>
      <PageNav><NavTri d="right" label="Next" /><NavTri d="right" bar label="Last" /></PageNav>
      <SaveState>
        <svg width="12" height="12" viewBox="0 0 12 12"><circle cx="6" cy="6" r="5" fill="none" stroke="#666" strokeWidth="1.300" /><path d="M4 3h4l1 5H4z" fill="#eee" stroke="#666" /></svg>
        Never Saved
        <Tri d="right" s={11} c="#000" />
      </SaveState>
      <HScroll><Tri d="left" s={7} /><HTrack><Thumb $w={15} $h={14} aria-label="Scroll horizontally" /></HTrack><Tri d="right" s={7} /></HScroll>
      <Corner />
    </StatusBar>
  </Document>
);

const channels = [
  { n: 'C', v: '31.37', from: '#f3b9bb', to: '#0083b8' },
  { n: 'M', v: '27.06', from: '#a6d5d6', to: '#b4167c' },
  { n: 'Y', v: '15.29', from: '#b0afd0', to: '#b8ae22' },
  { n: 'K', v: '0', from: '#b0afc0', to: '#000' },
];

const swatches = [
  '#000', '#000', '#000', '#000', '#00b79a', '#1010b0', '#e860b0', '#f08040', '#c8c850', '#00c040', '#30c0d0', '#e05030', '#30a0d0', '#1060c0',
  'none', 'reg', '#fff', '#000', '#ed1c24', '#fff200', '#00a651', '#00aeef', '#2e3192', '#ec008c', '#be1e2d', '#ef4136', '#f15a29', '#f7941d',
  '#fbb040', '#f9ed32', '#d7df23', '#8dc63f', '#39b54a', '#009444', '#006838', '#2bb673', '#13a89e', '#27aae1', '#1c75bc', '#2b3990', '#262262', '#662d91',
  '#92278f', '#9e1f63', '#da1c5c', '#ee2a7b', '#c2b59b', '#9b8579', '#726658', '#594a42', '#c49a6c', '#a97c50', '#8b5e3c', '#754c29', '#603913', '#3c2415',
  '#222', 'linear-gradient(90deg,#222,#ddd)', 'radial-gradient(#fff,#111)', 'checker',
  'linear-gradient(90deg,#f0a060,#f6dca8,#d9849a)', 'radial-gradient(#fff2c0,#b05a10 60%,#3a1400)', 'linear-gradient(45deg,#e8b020,#d83020 40%,#e06030 60%,#c02018)',
];
const greys = ['#000', '#414042', '#58595b', '#6d6e71', '#808285', '#939598', '#a7a9ac', '#bcbec0', '#d1d3d4', '#e6e7e8', '#f5f5f5'];

const SwatchCell = ({ bg }: { bg: string }) => {
  if (bg === 'none') return <Swatch $bg="#fff" aria-label="None"><svg width="13" height="13"><path d="M0 13L13 0" stroke="#b5122c" strokeWidth="2" /></svg></Swatch>;
  if (bg === 'reg') return <Swatch $bg="#fff" aria-label="Registration"><svg width="13" height="13"><circle cx="6.500" cy="6.500" r="4" fill="none" stroke="#000" strokeWidth="1.500" /><path d="M6.500 0v13M0 6.500h13" stroke="#000" strokeWidth="1.300" /></svg></Swatch>;
  if (bg === 'checker') return <Swatch $bg="#111" aria-label="Fade to clear"><svg width="13" height="13"><circle cx="6.500" cy="6.500" r="6" fill="#fff" /><path d="M3 3h2v2H3zM7 3h2v2H7zM5 5h2v2H5zM9 5h2v2H9zM3 7h2v2H3zM7 7h2v2H7zM5 9h2v2H5z" fill="#ccc" /></svg></Swatch>;
  return <Swatch $bg={bg} aria-label="Swatch" />;
};

const PanelMenu = () => <FlyoutButton aria-label="Panel menu"><Flyout /></FlyoutButton>;

const Panels = () => (
  <Dock>
    <DarkHeader $right><svg width="9" height="7" viewBox="0 0 9 7"><path d="M0 0v7l4-3.500zM5 0v7l4-3.500z" fill="#ddd" /></svg></DarkHeader>

    <Panel $h={121}>
      <TabStrip><PanelTab $w={57} $on $tight><Updown />COLOR</PanelTab><PanelTab $w={80}>COLOR GUIDE</PanelTab><PanelMenu /></TabStrip>
      <ColorBody>
        <svg width="34" height="70" viewBox="0 0 34 70">
          <rect x="12.500" y="14.500" width="18" height="18" fill="#fff" stroke="#000" /><rect x="17.500" y="19.500" width="8" height="8" fill="#ddd" stroke="#000" /><path d="M13 32l17-17" stroke="#b5122c" strokeWidth="2" />
          <rect x="2.500" y="5.500" width="18" height="18" fill={fill} stroke="#000" />
          <path d="M3 42l5-3 5 2v6l-5 3-5-3z" fill="#eee" stroke="#111" /><path d="M8 44l5-3v6l-5 3z" fill="#777" stroke="#111" /><path d="M3 42l5 2" stroke="#111" />
          <rect x="18.500" y="38.500" width="12" height="12" fill="#9c98cf" stroke="#111" />
        </svg>
        <div>
          {channels.map(c => (
            <SliderRow key={c.n}>
              <label htmlFor={'ch' + c.n}>{c.n}</label>
              <Slider type="range" aria-label={c.n + ' amount'} step="any" defaultValue={c.v} $from={c.from} $to={c.to} />
              <input id={'ch' + c.n} defaultValue={c.v} />
              <span>%</span>
            </SliderRow>
          ))}
        </div>
        <Spectrum><NoneMark s={15} hole={false} border={false} /><Rainbow /><Duo /></Spectrum>
      </ColorBody>
    </Panel>

    <Panel $h={110}>
      <TabStrip><PanelTab $w={67} $on>SWATCHES</PanelTab><PanelTab $w={55}>BRUSHES</PanelTab><PanelTab $w={55}>SYMBOLS</PanelTab><PanelMenu /></TabStrip>
      <ListRow $h={73}>
        <SwatchGrid>
          {swatches.map((s, i) => <SwatchCell key={i} bg={s} />)}
          <EmptyCells $from={8} />
          <Swatch $bg="#ddd" aria-label="Grays"><svg width="13" height="13"><path d="M1.500 4.500l2-2h3l1 2h4v6h-10z" fill="#f4f4f4" stroke="#777" /></svg></Swatch>
          {greys.map(g => <Swatch key={g} $bg={g} aria-label="Gray" />)}
          <EmptyCells $from={13} />
          <Marquee />
        </SwatchGrid>
        <VScroll $w={14}><Tri d="up" /><Thumb $w={13} $h={15} aria-label="Scroll swatches" /><Spacer /><Tri d="down" /></VScroll>
      </ListRow>
      <IconBar $h={18}>
        <svg width="18" height="12" viewBox="0 0 18 12"><path d="M1.500 1.500h8v5h-8zM4.500 4.500h8v5h-8z" fill="#eee" stroke="#444" /><path d="M7 7h6v4H7z" fill="#ccc" stroke="#222" /><path d="M17 8v3h-3z" /></svg>
        <svg width="18" height="12" viewBox="0 0 18 12"><path d="M1 1h6v5H1z" fill="#222" /><path d="M4 4h6v5H4z" fill="#555" stroke="#222" /><path d="M7.500 6.500h5v5h-5z" fill="#fff" stroke="#222" /><path d="M17 8v3h-3z" /></svg>
        <svg width="12" height="11" viewBox="0 0 12 11"><rect x=".5" y="1.500" width="11" height="8" fill="#ddd" stroke="#888" /><rect x="3.500" y="4.500" width="5" height="3" fill="#eee" stroke="#999" /></svg>
        <svg width="17" height="12" viewBox="0 0 17 12"><path d="M1.500 3.500l1-1h4l1 1h5v7h-11z" fill="#e4e4e4" stroke="#555" /><path d="M14 0v5M11.500 2.500h5" stroke="#111" strokeWidth="1.400" /></svg>
        <NewPage /><Trash /><GripCorner />
      </IconBar>
    </Panel>

    <Panel $h={119}>
      <TabStrip><PanelTab $w={36} aria-label="Stroke">STROK</PanelTab><PanelTab $w={36} aria-label="Gradient">GRAD</PanelTab><PanelTab $w={102} $on $tight><Updown />TRANSPARENCY</PanelTab><PanelMenu /></TabStrip>
      <TransparencyTop>
        <Select $w={94} $h={18} $inset><select aria-label="Blend mode"><option>Normal</option></select><Caret w={8} /></Select>
        <label htmlFor="op2">Opacity:</label>
        <Field $w={45} $h={18}><input id="op2" defaultValue="100" /><Drop as="button" aria-label="Opacity slider"><Tri d="right" s={8} /></Drop></Field>
        <Cell $w={12} $align="flex-end">%</Cell>
      </TransparencyTop>
      <TransparencyBottom>
        <PreviewBox><BigThumb /></PreviewBox>
        <Checks>
          <Check><input type="checkbox" disabled />Clip</Check>
          <Check><input type="checkbox" disabled />Invert Mask</Check>
        </Checks>
      </TransparencyBottom>
    </Panel>

    <Panel $h={156}>
      <TabStrip><PanelTab $w={77} $on>APPEARANCE</PanelTab><PanelTab $w={95}>GRAPHIC STYLES</PanelTab><PanelMenu /></TabStrip>
      <ListArea>
        <ListColumn>
          <AttrHead><ColorChip $s={20} />Path</AttrHead>
          <AttrRow><EyeCell aria-label="Toggle stroke"><Eye /></EyeCell><Twisty /><DotLink href="#stroke">Stroke:</DotLink><NoneMark s={18} hole={false} /></AttrRow>
          <AttrRow><EyeCell aria-label="Toggle fill"><Eye /></EyeCell><Twisty /><span>Fill:</span><InkChip $s={18} /></AttrRow>
          <AttrRow $last><EyeCell aria-label="Toggle opacity"><Eye dim /></EyeCell><span /><DotLink href="#opacity">Opacity:</DotLink><span>Default</span></AttrRow>
        </ListColumn>
        <VScroll $w={15}><Tri d="up" c="#888" /><Tri d="down" c="#888" /></VScroll>
      </ListArea>
      <IconBar $h={18}>
        <svg width="18" height="11" viewBox="0 0 18 11"><rect x="5.500" y="2.500" width="6" height="6" fill="#eee" stroke="#444" strokeWidth="3" /></svg>
        <svg width="18" height="11" viewBox="0 0 18 11"><rect x="4.500" y=".5" width="9" height="9" fill="#fff" stroke="#333" /></svg>
        <svg width="18" height="14" viewBox="0 0 18 14"><text x="0" y="11" fontSize="14" fontStyle="italic" fontWeight="bold" fontFamily="Liberation Serif" fill="#222">fx</text><path d="M17 10v3h-3z" /></svg>
        <svg width="11" height="11" viewBox="0 0 11 11"><circle cx="5.500" cy="5.500" r="4" fill="#eee" stroke="#555" strokeWidth="1.300" /><path d="M2.500 2.500l6 6" stroke="#555" /></svg>
        <NewPage dim /><Trash /><GripCorner />
      </IconBar>
    </Panel>

    <Panel>
      <TabStrip><PanelTab $w={50} $on>LAYERS</PanelTab><PanelMenu /></TabStrip>
      <ListArea>
        <ListColumn>
          <LayerRow $on>
            <LayerEye aria-label="Toggle Layer 2"><Eye /></LayerEye><LayerLock aria-label="Lock Layer 2" /><LayerBar $c="#ff4f4f" />
            <svg width="12" height="12" viewBox="0 0 12 12"><path d="M5.500 1.500v9l4-4.500z" fill="#fff" stroke="#579" /></svg>
            <LayerThumb /><span>Layer 2</span>
            <svg width="30" height="19" viewBox="0 0 30 19"><circle cx="12" cy="9.500" r="4" fill="none" stroke="#234" strokeWidth="1.200" /><rect x="22.500" y="6.500" width="7" height="7" fill="#ff4f4f" stroke="#000" /><path d="M25 1h5v5z" /></svg>
          </LayerRow>
          <LayerRow>
            <LayerEye aria-label="Toggle Layer 1"><Eye /></LayerEye>
            <LayerLock aria-label="Unlock Layer 1"><svg width="10" height="12" viewBox="0 0 10 12"><path d="M2.500 6V4a2.500 2.500 0 0 1 5 0v2" fill="none" stroke="#222" strokeWidth="1.600" /><rect x="1" y="5" width="8" height="6" fill="#222" /><path d="M5 7v2" stroke="#aaa" /></svg></LayerLock>
            <LayerBar $c="#4f7fff" />
            <svg width="12" height="12" viewBox="0 0 12 12"><path d="M5.500 1.500v9l4-4.500z" fill="#fff" stroke="#579" /></svg>
            <svg width="16" height="16" viewBox="0 0 16 16"><rect x=".5" y=".5" width="15" height="15" fill={fill} stroke="#000" /><path d="M4 4v7M7.500 3v9" stroke="#d8b84a" strokeWidth="2" /><path d="M5.500 5v6M9.500 4v8" stroke="#333" /><path d="M11 11l2-4" stroke="#eee" strokeWidth="2" /></svg>
            <span>Layer 1</span>
            <svg width="30" height="19" viewBox="0 0 30 19"><circle cx="12" cy="9.500" r="4" fill="none" stroke="#333" strokeWidth="1.200" /></svg>
          </LayerRow>
        </ListColumn>
        <VScroll $w={15}><Tri d="up" c="#888" /><Tri d="down" c="#888" /></VScroll>
      </ListArea>
      <IconBar $h={19}>
        <Cell $w={62}>2 Layers</Cell>
        <svg width="13" height="12" viewBox="0 0 13 12"><rect x=".5" y="1.500" width="7" height="6" fill="none" stroke="#666" strokeDasharray="1 1" /><circle cx="8" cy="7" r="4" fill="#eee" stroke="#333" /><path d="M8 3a4 4 0 0 1 0 8z" /></svg>
        <svg width="16" height="12" viewBox="0 0 16 12"><path d="M0 4h5M3 2l2 2-2 2" stroke="#222" fill="none" /><path d="M7 2.500h7v8H7z" fill="#eee" stroke="#888" /><path d="M14.500 3v8H7" fill="none" stroke="#111" strokeWidth="1.500" /><path d="M9 6h3v4" fill="#fff" stroke="#333" /></svg>
        <NewPage /><Trash /><Cell $w={8} />
      </IconBar>
    </Panel>
  </Dock>
);

const Arrow = ({ w, h, flip }: { w: number; h: number; flip?: boolean }) => {
  const m = h / 2;
  const pts: [number, number][] = [[0, m], [16, 0], [27, 0], [13, m - 3], [w, m - 3], [w, m + 3], [13, m + 3], [27, h], [16, h]];
  return (
    <svg width={w} height={h} viewBox={`0 0 ${w} ${h}`} aria-hidden>
      <polygon points={pts.map(([x, y]) => `${flip ? w - x : x},${y}`).join(' ')} />
    </svg>
  );
};

const Notes = () => (
  <>
    <ArrowPin $side="left" $x={76} $y={161}><Arrow w={51} h={30} /></ArrowPin>
    <Note $side="left" $x={134} $y={164} $w={120}>rectangle tool</Note>
    <ArrowPin $side="left" $x={36} $y={323}><Arrow w={52} h={25} /></ArrowPin>
    <Note $side="left" $x={95} $y={323} $w={140}>eyedropper tool</Note>
    <ArrowPin $side="left" $x={36} $y={416}><Arrow w={54} h={28} /></ArrowPin>
    <Note $side="left" $x={78} $y={410} $w={140}>{'save this color\nby dragging\nto point A'}</Note>
    <ArrowPin $side="right" $x={200} $y={243}><Arrow w={51} h={36} flip /></ArrowPin>
    <Note $side="right" $x={233} $y={241} $w={140}>{'point A\nsave colors here'}</Note>
    <ArrowPin $side="right" $x={218} $y={602}><Arrow w={43} h={25} flip /></ArrowPin>
    <Note $side="right" $x={260} $y={582} $w={140}>{'click this eye to \nmake the layer\ninvisible'}</Note>
  </>
);

const Orb = () => (
  <svg width="38" height="38" viewBox="0 0 38 38">
    <defs><radialGradient id="orb" cy=".9" r="1"><stop stopColor="#5fe0ff" /><stop offset=".45" stopColor="#1a77b8" /><stop offset="1" stopColor="#0b3560" /></radialGradient></defs>
    <circle cx="19" cy="19" r="17.500" fill="url(#orb)" stroke="#23405c" />
    <path d="M4 15a15.500 15.500 0 0 1 30 0c-9 4-20 4-30 0z" fill="#fff" opacity=".35" />
    <path d="M11 12c3-2 5-1.500 7.500-.5l-1.800 7c-3-1.200-5-1.200-7.700.3z" fill="#f0592a" />
    <path d="M20 12c3 1.400 5 1.300 8.500-.4l-2 7c-3 1.600-5 1.600-8 .4z" fill="#8cc63e" />
    <path d="M8.600 20.300c3-1.600 5-1.400 7.700-.4l-1.900 7c-3-1-5-1-7.600.5z" fill="#2fa5e8" />
    <path d="M17.800 20.500c3 1.200 5 1.200 8.200-.4l-2 7c-3 1.600-5 1.400-8 .3z" fill="#fdc82f" />
  </svg>
);

const icons = {
  explorer: <><path d="M3 4h8l2 3h14v22H3z" fill="#f5e3a0" stroke="#c9a94e" /><path d="M7 2h6v6H7z" fill="#dff0df" stroke="#7a9" /><path d="M8 2h3v3H8z" fill="#4a3" /><path d="M15 4h6v5h-6z" fill="#fff" stroke="#999" /><path d="M15 4h3v2h-3z" fill="#d43" /><path d="M22 6h6v5h-6z" fill="#fff" stroke="#999" /><path d="M23 6h3v2h-3z" fill="#36b" /><path d="M2 10h29l-1 19H3z" fill="#fae8ae" stroke="#d8bb66" /><path d="M6 31V21c0-2 1-3 3-3h14c2 0 3 1 3 3v10h-4v-6H10v6z" fill="#9fd3ef" stroke="#4b9fcb" /></>,
  media: <><path d="M11 5h18v23H11z" fill="#a8d3ee" stroke="#4c94c4" /><path d="M8 5h18v24H8z" fill="#c9e4f5" stroke="#4c94c4" /><path d="M5 6h18v22H5z" fill="#e1f0fa" stroke="#4c94c4" /><circle cx="14" cy="17" r="7.500" fill="#f08326" stroke="#c8621a" /><path d="M11.500 12.500v9l7-4.500z" fill="#fff" /></>,
  chrome: <><circle cx="17" cy="16" r="14" fill="#f7d02c" /><path d="M17 16L12 20 5 9a14 14 0 0 0 10 21l6-10z" fill="#45a63e" /><path d="M4.800 9A14 14 0 0 1 29.500 10H17c-3 0-5 2-5.500 5z" fill="#d8262c" /><circle cx="17" cy="16" r="6.500" fill="#f4f4f4" /><circle cx="17" cy="16" r="5" fill="#2c6fc0" /><circle cx="16" cy="14" r="2" fill="#7db4ec" /></>,
  vaio: <><path d="M5 4l21 4-5 16L0 20z" fill="#333" stroke="#222" /><path d="M5 4l21 4-2 5L3 12z" fill="#555" /><path d="M21 24l6-6 5 2-7 6-10 2-4-5z" fill="#1c1c1c" /><text x="7" y="16" fontSize="6" fontWeight="bold" fill="#ddd" fontFamily="Open Sans" transform="rotate(9 7 16)">VAIO</text></>,
  itunes: <><circle cx="18" cy="17" r="14.500" fill="#1b3f86" stroke="#c8c8d0" strokeWidth="1.500" /><circle cx="18" cy="17" r="12.500" fill="#2f82dc" /><path d="M6 18a12 12 0 0 1 24 0c-8-4-16-4-24 0z" fill="#82c4f6" opacity=".7" /><path d="M15 22.500V10.500l9-2v12" fill="none" stroke="#0d1526" strokeWidth="2.200" /><path d="M14 12.500l11-2.500V7.500L14 10z" fill="#0d1526" /><ellipse cx="13" cy="23" rx="3" ry="2.500" fill="#0d1526" /><ellipse cx="22" cy="21" rx="3" ry="2.500" fill="#0d1526" /></>,
  firefox: <><circle cx="18" cy="14" r="12" fill="#2a62b0" /><path d="M12 4c6-3 13 0 16 6-2-1-4-1-5 1-2 0-4 2-5 0-2-2-4-2-6-7z" fill="#74bce8" /><path d="M2 8c1 0 2-2 4-4 0 2 1 3 3 4 3-1 5 0 6 2l-4 3c0 3 2 5 5 5 3 1 4-1 6-1-1 3-4 5-7 5 5 2 11-2 11-8 0-3 0-5-2-7 5 3 8 8 7 13-1 7-8 12-15 12C6 32 0 25 0 18c0-4 1-7 2-10z" fill="#e2681c" /><path d="M28 12c3 8-2 15-10 16-7 1-13-3-15-9-1 7 5 12 13 12 9 0 16-8 12-19z" fill="#f5a81f" /><path d="M4 9c2-1 5 0 6 2-1 2-1 4 0 6-4-1-7-4-6-8z" fill="#b8441a" /></>,
  sticky: <><path d="M8 5l13 5-6 15L1 20z" fill="#b4e89a" stroke="#8cc878" /><path d="M10 10l13-2 2 17-14 2z" fill="#a8d4f4" stroke="#8cb8dc" /><path d="M14 12l15-4 4 15-16 5z" fill="#fbe36a" stroke="#dcc040" /></>,
  odf: <><path d="M8 2h14l8 8v21H8z" fill="#fdfdfd" stroke="#999" /><path d="M22 2v8h8" fill="#ddd" stroke="#999" /><path d="M12 16h7M12 19h7M12 22h7M12 25h15M12 28h15" stroke="#888" strokeWidth="1.200" /><rect x="21.500" y="15.500" width="5" height="7" fill="#bbb" stroke="#777" /><path d="M3 4h17v9H3z" fill="#0a7cc0" /><text x="4" y="11" fontSize="7" fontWeight="bold" fill="#fff" fontFamily="Open Sans">ODF</text></>,
  ai: <><rect x="3" y="2" width="29" height="28" rx="2" fill="url(#aiGrad)" stroke="#dba24a" /><text x="9.500" y="22" fontSize="17" fontWeight="bold" fill="#3b2600" fontFamily="Open Sans">Ai</text></>,
  feather: <><rect x="6.500" y="6.500" width="25" height="25" rx="2" fill="#fdfdfd" stroke="#ccc" /><path d="M4 3c7-2 14 5 15 11l3 9 6 6c-6-1-9-3-12-6C8 21 2 12 4 3z" fill="#1f56c4" /><path d="M12 14l7 2 3 7 6 6c-6-1-9-3-12-6-3-2-5-5-4-9z" fill="#26a05e" /><path d="M7 2c5 2 9 6 10 12-5-2-9-7-10-12z" fill="#4aa4ee" /><path d="M6 5c5 9 11 16 22 24" stroke="#103a70" fill="none" /></>,
};
const tasks: { k: keyof typeof icons; open?: boolean; on?: boolean }[] = [
  { k: 'explorer', open: true }, { k: 'media' }, { k: 'chrome' }, { k: 'vaio' }, { k: 'itunes' },
  { k: 'firefox', open: true }, { k: 'sticky', open: true }, { k: 'odf', open: true }, { k: 'ai', open: true, on: true }, { k: 'feather', open: true },
];

const Tasks = () => (
  <TaskBar>
    <StartButton aria-label="Start"><Orb /></StartButton>
    {tasks.map(t => (
      <TaskButton key={t.k} $open={t.open} $on={t.on} aria-label={t.k}>
        <svg width="34" height="34" viewBox="0 0 34 34">
          <defs><linearGradient id="aiGrad" x2="0" y2="1"><stop stopColor="#fbb62e" /><stop offset="1" stopColor="#e8861a" /></linearGradient></defs>
          {icons[t.k]}
        </svg>
      </TaskButton>
    ))}
    <Tray>
      <DesktopLabel>Desktop<svg width="9" height="7" viewBox="0 0 9 7"><path d="M1 1l3 2.500L1 6M5 1l3 2.500L5 6" fill="none" stroke="#fff" strokeWidth="1.300" /></svg></DesktopLabel>
      <TrayIcon aria-label="Show hidden icons"><svg width="10" height="6"><path d="M0 6l5-5 5 5z" fill="#fff" stroke="#888" strokeWidth=".5" /></svg></TrayIcon>
      <TrayIcon aria-label="Network activity"><svg width="14" height="16" viewBox="0 0 14 16"><path d="M1 8l6-6 2 1v11l-2 1z" fill="#6cb84a" /><path d="M3 6c2 1 2 3 1 5M6 4c2 2 2 6 0 9M9 2c3 3 3 9 0 13" fill="none" stroke="#2c7a20" strokeWidth="1.800" /></svg></TrayIcon>
      <TrayIcon aria-label="Battery"><svg width="11" height="16" viewBox="0 0 11 16"><rect x="1.500" y="2.500" width="8" height="12" rx="1" fill="#777" stroke="#fff" strokeWidth="1.600" /><path d="M4 1h3M3 6h5" stroke="#fff" strokeWidth="1.400" /></svg></TrayIcon>
      <TrayIcon aria-label="Signal"><svg width="16" height="13" viewBox="0 0 16 13"><path d="M1 10h2v2H1zM4 8h2v4H4zM7 6h2v6H7zM10 3h2v9h-2zM13 1h2v11h-2z" fill="#fff" stroke="#777" strokeWidth=".6" /></svg></TrayIcon>
      <TrayIcon aria-label="Muted"><svg width="16" height="16" viewBox="0 0 16 16"><path d="M1 5h3l4-4v13l-4-4H1z" fill="#fff" stroke="#777" strokeWidth=".6" /><circle cx="10.500" cy="10.500" r="4" fill="#fff" stroke="#d22" strokeWidth="1.800" /><path d="M8 8l5 5" stroke="#d22" strokeWidth="1.800" /></svg></TrayIcon>
      <Clock>10:12 AM<br />11/30/2010</Clock>
      <ShowDesktop aria-label="Show desktop" />
    </Tray>
  </TaskBar>
);

export default function App() {
  return (
    <Screen>
      <GlobalStyle />
      <WindowFrame>
        <Menus />
        <Body>
          <Controls />
          <Workspace>
            <Toolbox />
            <Doc />
            <Panels />
          </Workspace>
        </Body>
      </WindowFrame>
      <Tasks />
      <Notes />
    </Screen>
  );
}
